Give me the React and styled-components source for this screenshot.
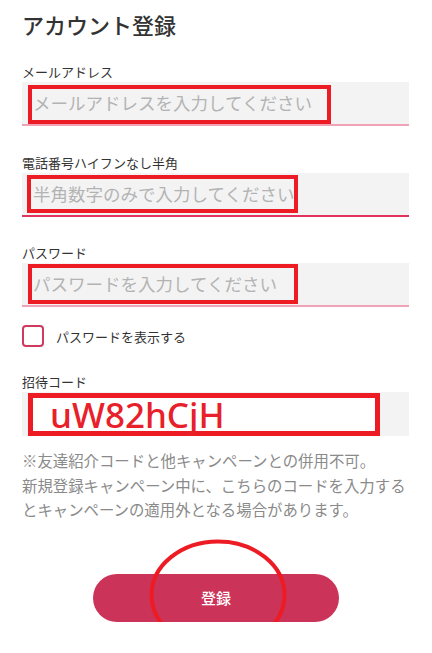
import React from "react";
import styled, { createGlobalStyle } from "styled-components";

const Global = createGlobalStyle`
  html, body { margin: 0; padding: 0; background: #ffffff; }
  body {
    font-family: "Noto Sans CJK JP", "Noto Sans", sans-serif;
    color: #333333;
  }
  * { box-sizing: border-box; }
`;

const Page = styled.div`
  width: 432px;
  padding: 0 23px 0 22px;
  display: flex;
  flex-direction: column;
`;

const Title = styled.h1`
  margin: 0;
  padding-top: 6px;
  height: 50px;
  font-size: 22px;
  font-weight: 500;
  line-height: 36px;
  color: #333333;
  margin-bottom: 12px;
`;

const Field = styled.div`
  display: flex;
  flex-direction: column;
  margin-bottom: ${(p) => p.$mb || 0}px;
`;

const Label = styled.label`
  font-size: 13px;
  line-height: 20px;
  height: 20px;
  color: #333333;
`;

const InputBox = styled.div`
  position: relative;
  height: ${(p) => p.$h || 44}px;
  background: #f3f3f3;
  border-bottom: 2px solid ${(p) => p.$line || "transparent"};
  display: flex;
  align-items: center;
  padding-left: 11px;
`;

const Placeholder = styled.span`
  font-size: 17.5px;
  color: #b3b3b3;
  line-height: 1;
  white-space: nowrap;
`;

const Mark = styled.div`
  position: absolute;
  border: ${(p) => p.$bw || 4}px solid #ed1c24;
  background: ${(p) => (p.$fill ? "#ffffff" : "transparent")};
  display: flex;
  align-items: center;
  padding-left: 17px;
`;

const CodeText = styled.span`
  font-family: "Noto Sans", "Liberation Sans", sans-serif;
  font-size: 35px;
  font-weight: 500;
  line-height: 1;
  color: #e8202a;
`;

const CheckRow = styled.div`
  display: flex;
  align-items: center;
  gap: 12px;
  margin-top: 18px;
  margin-bottom: 25px;
  height: 22px;
`;

const Box = styled.span`
  width: 22px;
  height: 22px;
  border: 2px solid #cf3a5f;
  border-radius: 4px;
  background: #fff;
`;

const CheckLabel = styled.span`
  font-size: 13px;
  color: #333333;
`;

const Note = styled.p`
  margin: 12px 0 0;
  font-size: 15.4px;
  line-height: 24.5px;
  color: #8a8a8a;
`;

const ButtonArea = styled.div`
  position: relative;
  display: flex;
  justify-content: center;
  margin-top: 52px;
  margin-left: -22px;
  margin-right: -23px;
`;

const Button = styled.button`
  width: 246px;
  height: 48px;
  border: none;
  border-radius: 24px;
  background: #cc3358;
  color: #ffffff;
  font-family: "Noto Sans CJK JP", sans-serif;
  font-size: 15px;
  font-weight: 500;
  cursor: pointer;
`;

const Circle = styled.svg`
  position: absolute;
  left: 149px;
  top: -35px;
  pointer-events: none;
`;

export default function App() {
  return (
    <>
      <Global />
      <Page>
        <Title>アカウント登録</Title>

        <Field $mb={26.5}>
          <Label>メールアドレス</Label>
          <InputBox $line="#f0a3b6">
            <Placeholder>メールアドレスを入力してください</Placeholder>
            <Mark style={{ left: 6, top: 3, width: 303, height: 39 }} />
          </InputBox>
        </Field>

        <Field $mb={26.5}>
          <Label>電話番号ハイフンなし半角</Label>
          <InputBox $line="#e0335e">
            <Placeholder>半角数字のみで入力してください</Placeholder>
            <Mark style={{ left: 5, top: 2, width: 271, height: 38 }} />
          </InputBox>
        </Field>

        <Field>
          <Label>パスワード</Label>
          <InputBox $line="#f0a3b6">
            <Placeholder>パスワードを入力してください</Placeholder>
            <Mark style={{ left: 6, top: 1, width: 270, height: 40 }} />
          </InputBox>
        </Field>

        <CheckRow>
          <Box />
          <CheckLabel>パスワードを表示する</CheckLabel>
        </CheckRow>

        <Field>
          <Label>招待コード</Label>
          <InputBox>
            <Mark $bw={5} $fill style={{ left: 6, top: 1, width: 352, height: 43 }}>
              <CodeText>uW82hCjH</CodeText>
            </Mark>
          </InputBox>
        </Field>

        <Note>
          ※友達紹介コードと他キャンペーンとの併用不可。
          <br />
          新規登録キャンペーン中に、こちらのコードを入力するとキャンペーンの適用外となる場合があります。
        </Note>

        <ButtonArea>
          <Button>登録</Button>
          <Circle width="138" height="112" viewBox="0 0 138 112">
            <ellipse cx="69" cy="56" rx="66.5" ry="53.5" fill="none" stroke="#ed1c24" strokeWidth="4" />
          </Circle>
        </ButtonArea>
      </Page>
    </>
  );
}
